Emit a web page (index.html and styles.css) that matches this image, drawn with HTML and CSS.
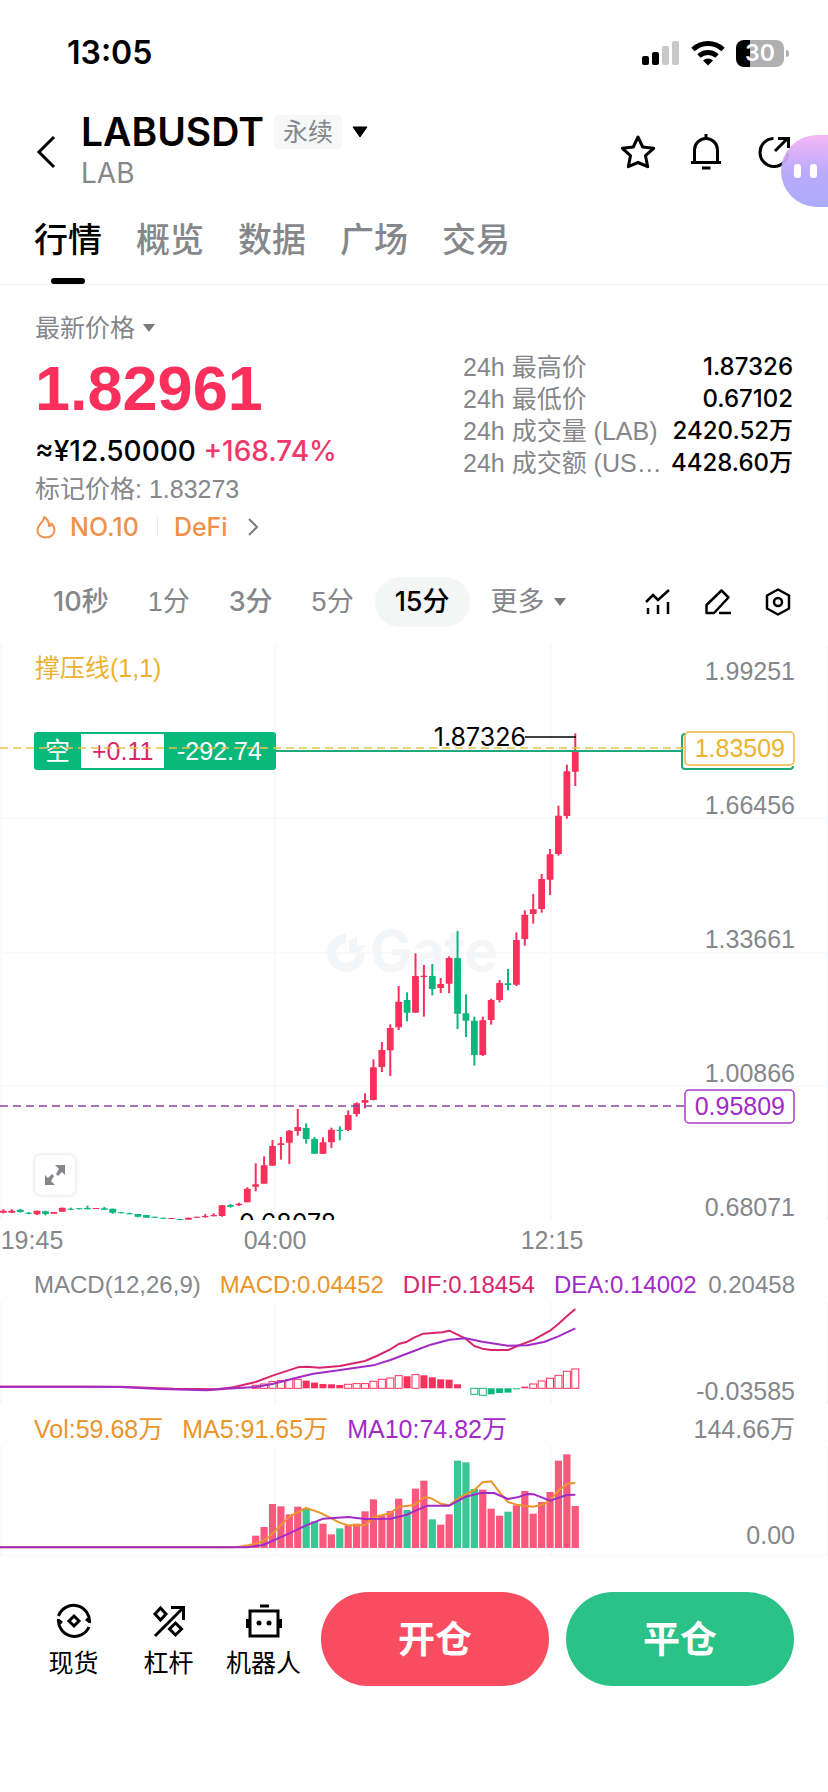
FILE: index.html
```html
<!DOCTYPE html>
<html lang="zh-CN">
<head>
  <meta charset="UTF-8">
  <meta name="viewport" content="width=device-width, initial-scale=1">
  <title>LABUSDT 永续</title>
  <link rel="stylesheet" href="styles.css">
</head>
<body>
  <div class="status-bar">
    <span class="clock">13:05</span>
    <div class="status-icons">
      <svg width="38" height="26" viewBox="0 0 38 26">
        <rect x="0" y="16" width="7" height="9" rx="2"/>
        <rect x="10" y="12" width="7" height="13" rx="2"/>
        <rect x="20" y="6" width="7" height="19" rx="2" fill="#c9c9c9"/>
        <rect x="30" y="1" width="7" height="24" rx="2" fill="#c9c9c9"/>
      </svg>
      <svg width="34" height="26" viewBox="0 0 34 26" fill="none" stroke="#000" stroke-width="5">
        <path d="M2 9.500a21.500 21.500 0 0 1 30 0"/>
        <path d="M8 16a13 13 0 0 1 18 0"/>
        <path d="M17 25.500l-5-5a7.500 7.500 0 0 1 10 0z" fill="#000" stroke="none"/>
      </svg>
      <div class="battery"><span>30</span></div>
    </div>
  </div>

  <header class="header">
    <button class="icon-btn back" aria-label="返回">
      <svg width="20" height="34" viewBox="0 0 20 34" fill="none" stroke="#000" stroke-width="3"><path d="M18 2L3 17l15 15"/></svg>
    </button>
    <div class="pair">
      <div class="pair-row">
        <h1>LABUSDT</h1>
        <span class="tag">永续</span>
        <svg width="16" height="12" viewBox="0 0 16 12"><path d="M1 1h14l-7 10z" stroke="#000" stroke-linejoin="round"/></svg>
      </div>
      <div class="pair-sub">LAB</div>
    </div>
    <div class="header-icons">
      <button class="icon-btn" aria-label="收藏">
        <svg width="36" height="36" viewBox="0 0 36 36" fill="none" stroke="#000" stroke-width="3" stroke-linejoin="round"><path d="M18 3l4.700 10 11 1.300-8.200 7.400 2.200 11L18 28.500 8.300 32.700l2.200-11L2.300 14.300l11-1.300z"/></svg>
      </button>
      <button class="icon-btn" aria-label="提醒">
        <svg width="36" height="36" viewBox="0 0 36 36" fill="none" stroke="#000" stroke-width="3"><path d="M18 0v4M6.500 28V16a11.500 11.500 0 0 1 23 0v12M3 28.500h30M14 34h8.500"/></svg>
      </button>
      <button class="icon-btn" aria-label="分享">
        <svg width="36" height="36" viewBox="0 0 36 36" fill="none" stroke="#000" stroke-width="3"><path d="M17.500 4.500A14 14 0 1 0 32 19M19 17L32 4M22 4.500h10.500V14"/></svg>
      </button>
    </div>
    <button class="assistant" aria-label="助手"><i></i><i></i></button>
  </header>

  <nav class="tabs">
    <a href="#" class="active">行情</a>
    <a href="#">概览</a>
    <a href="#">数据</a>
    <a href="#">广场</a>
    <a href="#">交易</a>
  </nav>

  <section class="summary">
    <div class="price-box">
      <button class="price-type">最新价格
        <svg width="12" height="8" viewBox="0 0 12 8"><path d="M0 0h12L6 8z" fill="#777b80"/></svg>
      </button>
      <div class="price">1.82961</div>
      <div class="converted">≈¥12.50000 <span class="up">+168.74%</span></div>
      <div class="mark">标记价格: 1.83273</div>
      <div class="rank">
        <svg width="22" height="24" viewBox="0 0 22 24" fill="none" stroke="#f0914c" stroke-width="2" stroke-linejoin="round"><path d="M9 2c1 4-6 7-6.500 13C2.500 20 6.500 22.500 11 22.500s8.500-3 8.500-7.500c0-2.500-1.500-5-3-6.500-.5 2-1.500 2.500-2.500 2.500C14 7 12 3.500 9 2z"/></svg>
        <span>NO.10</span>
        <span class="bar"></span>
        <a href="#">DeFi</a>
        <svg width="12" height="18" viewBox="0 0 12 18" fill="none" stroke="#777b80" stroke-width="2"><path d="M2 1l8 8-8 8"/></svg>
      </div>
    </div>
    <dl class="stats">
      <div><dt>24h 最高价</dt><dd>1.87326</dd></div>
      <div><dt>24h 最低价</dt><dd>0.67102</dd></div>
      <div><dt>24h 成交量 (LAB)</dt><dd>2420.52万</dd></div>
      <div><dt>24h 成交额 (USDT)</dt><dd>4428.60万</dd></div>
    </dl>
  </section>

  <div class="periods">
    <button class="fav">10秒</button>
    <button>1分</button>
    <button class="fav">3分</button>
    <button>5分</button>
    <button class="active">15分</button>
    <button class="more">更多
      <svg width="12" height="8" viewBox="0 0 12 8"><path d="M0 0h12L6 8z" fill="#777b80"/></svg>
    </button>
    <div class="tools">
      <button class="icon-btn" aria-label="指标">
        <svg width="28" height="28" viewBox="0 0 28 28" fill="none" stroke="#000" stroke-width="2.500"><path d="M2 14l7-7 5 5L25 2M4 20v6M14 17v9M24 14v12"/></svg>
      </button>
      <button class="icon-btn" aria-label="画线">
        <svg width="28" height="28" viewBox="0 0 28 28" fill="none" stroke="#000" stroke-width="2.500" stroke-linejoin="round"><path d="M17.500 2.500l7 7L10 25H2.500v-8zM15 25h12"/></svg>
      </button>
      <button class="icon-btn" aria-label="设置">
        <svg width="28" height="28" viewBox="0 0 28 28" fill="none" stroke="#000" stroke-width="2.500" stroke-linejoin="round"><path d="M14 1.500l11 6v13l-11 6-11-6v-13z"/><circle cx="14" cy="14" r="4"/></svg>
      </button>
    </div>
  </div>

  <main class="charts">
    <div class="kline">
      <svg viewBox="0 0 828 620">
        <path class="grid" d="M1 5v575M275 5v575M551 5v575M827 5v575M0 178h828M0 313h828M0 446h828"/>

        <g class="watermark">
          <path d="M346 294a19 19 0 1 0 19 19h-9a10 10 0 1 1-10-10z"/>
          <path d="M349 301l8-5v9h9l-6 9h-11z"/>
          <text x="370" y="331">Gate</text>
        </g>

        <text class="gold" x="35" y="37">撑压线(1,1)</text>

        <g id="candles"></g>

        <path d="M276 111h406" stroke="#1fa97a" stroke-width="2"/>
        <path d="M686 94h-1q-3 0-3 3v29q0 3 3 3h105q3 0 3-3" fill="none" stroke="#1fa97a" stroke-width="2"/>

        <rect x="34" y="92" width="242" height="38" rx="3" fill="#09b87b"/>
        <rect x="81" y="94" width="83" height="34" fill="#fff"/>
        <text class="white" x="45" y="120">空</text>
        <text class="pink" x="92" y="120">+0.11</text>
        <text class="white" x="177" y="120">-292.74</text>
        <path d="M0 108h685" stroke="#e9c34c" stroke-width="1.500" stroke-dasharray="8 5"/>

        <rect x="685" y="92" width="109" height="33" rx="4" fill="#fff" stroke="#e9b93a" stroke-width="1.500"/>
        <text class="gold end" x="785" y="117">1.83509</text>

        <path d="M0 466h685" stroke="#8d43a6" stroke-width="1.500" stroke-dasharray="8 5"/>
        <rect x="685" y="450" width="109" height="33" rx="4" fill="#fff" stroke="#a53bc4" stroke-width="1.500"/>
        <text class="violet end" x="785" y="475">0.95809</text>

        <text class="peak end" x="526" y="106">1.87326</text>
        <path d="M525 97h51" stroke="#000" stroke-width="1.500"/>
        <svg x="0" y="0" width="828" height="580"><text class="peak" x="239" y="592">0.68078</text></svg>

        <g class="axis">
          <text x="795" y="40">1.99251</text>
          <text x="795" y="174">1.66456</text>
          <text x="795" y="308">1.33661</text>
          <text x="795" y="442">1.00866</text>
          <text x="795" y="576">0.68071</text>
        </g>
        <g class="time">
          <text x="32" y="609">19:45</text>
          <text x="275" y="609">04:00</text>
          <text x="552" y="609">12:15</text>
        </g>
      </svg>
      <button class="expand" aria-label="全屏">
        <svg width="20" height="20" viewBox="0 0 20 20" fill="#85878a"><path d="M10 0h10v10l-3-3-4 4-2-2 3-5zM0 10l3 3 4-4 2 2-3 5 4 4H0z"/></svg>
      </button>
    </div>

    <div class="legend">
      <span>MACD(12,26,9)</span>
      <span class="orange">MACD:0.04452</span>
      <span class="pink">DIF:0.18454</span>
      <span class="violet">DEA:0.14002</span>
      <span class="max">0.20458</span>
    </div>
    <svg viewBox="0 0 828 102">
      <path class="grid" d="M1 0v102M275 0v102M551 0v102M827 0v102"/>
      <g id="macd"></g>
      <g class="axis"><text x="795" y="98">-0.03585</text></g>
    </svg>

    <div class="legend vol">
      <span class="orange">Vol:59.68万</span>
      <span class="orange">MA5:91.65万</span>
      <span class="violet">MA10:74.82万</span>
      <span class="max">144.66万</span>
    </div>
    <svg viewBox="0 0 828 110">
      <path class="grid" d="M1 0v110M275 0v110M551 0v110M827 0v110M0 110h828"/>
      <g id="volume"></g>
      <g class="axis"><text x="795" y="98">0.00</text></g>
    </svg>
  </main>

  <footer class="bottom">
    <a href="#" class="entry">
      <svg width="36" height="36" viewBox="0 0 36 36" fill="none" stroke="#000" stroke-width="3"><path d="M2.500 13A16 16 0 0 1 33.500 20M33 24A16 16 0 0 1 2.500 16M2 17l4 3M34 19l-4-3M18 13l5 5-5 5-5-5z"/></svg>
      <span>现货</span>
    </a>
    <a href="#" class="entry">
      <svg width="36" height="36" viewBox="0 0 36 36" fill="none" stroke="#000" stroke-width="3"><path d="M4 33L32 5M20 4.500h12.500V17M9.500 5l5.500 6-5.500 6-5.500-6zM24.500 20l6 6-6 6-6-6z"/></svg>
      <span>杠杆</span>
    </a>
    <a href="#" class="entry">
      <svg width="36" height="36" viewBox="0 0 36 36" fill="none" stroke="#000" stroke-width="3"><path d="M4 8h28v25H4zM14 3h9M1.500 16v9M34.500 16v9" /><circle cx="13" cy="20" r="2.500" fill="#000" stroke="none"/><circle cx="23" cy="20" r="2.500" fill="#000" stroke="none"/></svg>
      <span>机器人</span>
    </a>
    <button class="trade open">开仓</button>
    <button class="trade close">平仓</button>
  </footer>

  <script src="chart.js"></script>
</body>
</html>
```

FILE: styles.css
```css
* {
  box-sizing: border-box;
}

body {
  margin: 0;
  background: #fff;
  color: #000;
  font-family: 'Liberation Sans', 'Noto Sans CJK SC', sans-serif;
  font-size: 25px;
  line-height: 32px;
}

button {
  padding: 0;
  border: none;
  background: none;
  color: inherit;
  font: inherit;
  cursor: pointer;
}

a {
  color: inherit;
  text-decoration: none;
}

svg {
  display: block;
}

.icon-btn {
  display: flex;
}

/* status bar */
.status-bar {
  display: flex;
  justify-content: space-between;
  align-items: center;
  height: 106px;
  padding: 0 44px 0 67px;
}

.clock {
  font-family: Inter, sans-serif;
  font-size: 32px;
  font-weight: 600;
}

.status-icons {
  display: flex;
  align-items: center;
  gap: 11px;
}

.battery {
  position: relative;
  width: 48px;
  height: 27px;
  border-radius: 8px;
  background: linear-gradient(90deg, #000 14px, #b0b0b0 14px);
  color: #fff;
  font-family: Inter, sans-serif;
  font-size: 23px;
  font-weight: 600;
  line-height: 27px;
  text-align: center;
}

.battery::after {
  content: '';
  position: absolute;
  top: 10px;
  right: -5px;
  width: 3px;
  height: 7px;
  border-radius: 0 3px 3px 0;
  background: #b0b0b0;
}

/* header */
.header {
  position: relative;
  display: flex;
  align-items: center;
  height: 94px;
  padding: 0 36px 2px 36px;
}

.pair {
  flex: 1;
  padding: 0 0 4px 25px;
  font-family: Inter, 'Noto Sans CJK SC', sans-serif;
}

.pair-row {
  display: flex;
  align-items: center;
  gap: 10px;
}

h1 {
  margin: 0;
  font-size: 39px;
  font-weight: 600;
  line-height: 46px;
}

.tag {
  padding: 0 9px;
  border-radius: 4px;
  background: #f6f7f8;
  color: #85878a;
  font-size: 25px;
  line-height: 34px;
}

.pair-sub {
  color: #85878a;
  font-size: 28px;
  line-height: 36px;
}

.header-icons {
  display: flex;
  gap: 32px;
}

.assistant {
  position: absolute;
  top: 29px;
  right: 0;
  display: flex;
  align-items: center;
  gap: 9px;
  width: 47px;
  height: 72px;
  padding-left: 13px;
  border-radius: 36px 0 0 36px;
  background: linear-gradient(rgba(246, 178, 246, 0.94), rgba(184, 165, 250, 0.94) 50%, rgba(166, 166, 252, 0.94));
}

.assistant i {
  width: 7px;
  height: 14px;
  border-radius: 3px;
  background: #fff;
}

/* tabs */
.tabs {
  display: flex;
  gap: 34px;
  padding: 0 34px;
  border-bottom: 1px solid #f1f2f3;
  color: #85878a;
  font-size: 34px;
  font-weight: 500;
}

.tabs a {
  position: relative;
  padding: 20px 0 24px;
  line-height: 40px;
}

.tabs .active {
  color: #000;
}

.tabs .active::after {
  content: '';
  position: absolute;
  bottom: 0;
  left: 50%;
  width: 34px;
  height: 6px;
  margin-left: -17px;
  border-radius: 3px;
  background: #000;
}

/* price summary */
.summary {
  display: flex;
  justify-content: space-between;
  padding: 27px 35px 0;
}

.price-type {
  display: flex;
  align-items: center;
  gap: 8px;
  color: #85878a;
}

.price {
  color: #fb2f5c;
  font-size: 63px;
  font-weight: 700;
  line-height: 88px;
}

.converted {
  font-family: Inter, sans-serif;
  font-size: 28px;
  font-weight: 500;
  line-height: 38px;
}

.up {
  color: #f0386a;
}

.mark {
  color: #85878a;
  line-height: 38px;
}

.rank {
  display: flex;
  align-items: center;
  gap: 13px;
  color: #f0914c;
  font-family: Inter, sans-serif;
  font-weight: 500;
  line-height: 38px;
}

.rank .bar {
  width: 1px;
  height: 20px;
  margin: 0 3px 0 5px;
  background: #e8eaec;
}

.rank a {
  margin-right: 6px;
}

.stats {
  width: 330px;
  margin: 39px 0 0;
}

.stats div {
  display: flex;
  justify-content: space-between;
  gap: 4px;
  white-space: nowrap;
}

.stats dt {
  min-width: 0;
  overflow: hidden;
  color: #85878a;
  text-overflow: ellipsis;
}

.stats dd {
  flex: none;
  margin: 0;
  font-family: Inter, 'Noto Sans CJK SC', sans-serif;
  font-size: 24px;
  font-weight: 500;
}

/* periods */
.periods {
  display: flex;
  align-items: center;
  gap: 3px;
  margin: 31px 0 13px;
  padding: 0 36px 0 35px;
  color: #85878a;
  font-size: 27px;
}

.periods > button {
  padding: 0 18px;
  border-radius: 25px;
  line-height: 50px;
}

.periods .fav,
.periods .active {
  font-family: Inter, 'Noto Sans CJK SC', sans-serif;
  font-weight: 500;
}

.periods .active {
  padding: 0 20px;
  background: #f4f5f5;
  color: #000;
}

.periods .more {
  display: flex;
  align-items: center;
  gap: 9px;
}

.tools {
  display: flex;
  gap: 32px;
  margin-left: auto;
}

/* charts */
.charts > svg,
.kline > svg {
  width: 100%;
}

.kline {
  position: relative;
}

.expand {
  position: absolute;
  left: 35px;
  bottom: 65px;
  display: flex;
  align-items: center;
  justify-content: center;
  width: 40px;
  height: 40px;
  border-radius: 6px;
  background: #fff;
  box-shadow: 0 0 4px rgba(0, 0, 0, 0.16);
}

.grid {
  fill: none;
  stroke: #f8f9fa;
  stroke-width: 2;
}

.watermark {
  fill: #f4f5f7;
  font-family: Inter, sans-serif;
  font-size: 56px;
  font-weight: 700;
}

.axis {
  fill: #85878a;
  text-anchor: end;
}

.time {
  fill: #85878a;
  text-anchor: middle;
}

.end {
  text-anchor: end;
}

.white {
  fill: #fff;
}

.peak {
  fill: #000;
  font-family: Inter, sans-serif;
  font-size: 25px;
}

.gold {
  fill: #ecb22e;
}

.orange {
  color: #e9952c;
}

.pink {
  fill: #d9266b;
  color: #d9266b;
}

.violet {
  fill: #a22bc8;
  color: #a22bc8;
}

.legend {
  display: flex;
  padding: 8px 33px 0 34px;
  color: #85878a;
  font-size: 24px;
  line-height: 34px;
  white-space: nowrap;
}

.legend.vol {
  font-size: 25px;
}

.legend span + span {
  margin-left: 19px;
}

.legend .max:last-child {
  margin-left: auto;
}

/* bottom bar */
.bottom {
  display: flex;
  align-items: center;
  padding: 36px 34px 36px 26px;
}

.entry {
  display: flex;
  flex-direction: column;
  align-items: center;
  gap: 8px;
  width: 95px;
  padding-top: 4px;
}

.trade {
  flex: 1;
  height: 94px;
  margin-left: 10px;
  padding-top: 4px;
  border-radius: 47px;
  color: #fff;
  font-size: 37px;
  font-weight: 700;
}

.trade + .trade {
  margin-left: 17px;
}

.open {
  background: #f84c60;
}

.close {
  background: #2bc287;
}
```

FILE: chart.js
```js
const RED = '#f92f5c';
const GREEN = '#0ab77c';
const STEP = 25.23;

// one candle per 15 minutes: colour, body top, body bottom, wick top, wick bottom
// (all series use a plot scale of 3 units per pixel)
const candles = [
  ['r', 722, 728, 718, 730], ['r', 722, 728, 718, 729], ['g', 719, 726, 717, 728], ['g', 728, 731, 726, 733],
  ['r', 722, 733, 722, 735], ['g', 724, 732, 722, 736], ['r', 726, 731, 726, 731], ['r', 713, 725, 713, 725],
  ['g', 716, 719, 713, 720], ['g', 715, 718, 715, 718], ['g', 714, 718, 707, 718], ['r', 714, 717, 714, 717],
  ['g', 715, 719, 711, 719], ['g', 716, 728, 716, 731], ['g', 727, 730, 727, 730], ['g', 730, 733, 728, 733],
  ['g', 732, 740, 732, 742], ['g', 735, 743, 735, 743], ['g', 740, 743, 740, 743], ['g', 743, 746, 743, 746],
  ['r', 744, 747, 744, 747], ['g', 747, 750, 747, 750], ['r', 743, 749, 743, 749], ['r', 740, 743, 740, 743],
  ['r', 738, 742, 732, 743], ['r', 735, 739, 730, 739], ['r', 706, 738, 705, 740], ['g', 705, 710, 702, 713],
  ['r', 701, 706, 698, 708], ['r', 656, 697, 652, 697], ['r', 643, 650, 580, 664], ['r', 586, 641, 559, 641],
  ['r', 528, 587, 510, 587], ['r', 520, 525, 501, 569], ['r', 482, 518, 480, 582], ['r', 471, 483, 417, 497],
  ['g', 474, 507, 460, 521], ['g', 507, 551, 501, 551], ['r', 517, 551, 502, 552], ['r', 479, 517, 473, 534],
  ['g', 479, 483, 469, 511], ['r', 435, 480, 421, 483], ['r', 400, 432, 397, 440], ['r', 390, 398, 370, 415],
  ['r', 292, 390, 268, 391], ['r', 240, 291, 216, 306], ['r', 174, 241, 163, 318], ['r', 95, 172, 48, 180],
  ['g', 90, 128, 67, 154], ['r', 18, 128, -50, 128], ['r', 17, 21, -15, 140], ['g', 18, 57, -18, 76],
  ['r', 42, 54, 24, 69], ['r', -36, 41, -41, 70], ['g', -36, 131, -117, 177], ['g', 130, 152, 73, 201],
  ['g', 152, 255, 140, 287], ['r', 151, 255, 140, 258], ['r', 90, 150, 86, 164], ['r', 39, 90, 30, 97],
  ['g', 40, 45, -3, 61], ['r', -90, 44, -113, 48], ['r', -166, -93, -179, -73], ['r', -182, -168, -228, -139],
  ['r', -273, -183, -288, -172], ['r', -347, -271, -363, -225], ['r', -463, -348, -493, -343],
  ['r', -596, -462, -616, -454], ['r', -656, -595, -710, -552]
];

// histogram from candle 30 on: height, h = hollow, f = filled
const hist = [
  [9, 'h'], [13, 'h'], [20, 'h'], [23, 'h'], [26, 'h'], [27, 'h'], [23, 'f'], [17, 'f'], [13, 'f'], [12, 'f'],
  [10, 'f'], [12, 'h'], [14, 'h'], [14, 'h'], [21, 'h'], [27, 'h'], [31, 'h'], [38, 'h'], [36, 'f'], [41, 'h'],
  [39, 'f'], [33, 'f'], [27, 'f'], [26, 'f'], [12, 'f'], [0, 'f'], [-18, 'h'], [-21, 'h'], [-18, 'f'], [-14, 'f'],
  [-13, 'f'], [-3, 'f'], [5, 'f'], [13, 'h'], [22, 'h'], [30, 'h'], [39, 'h'], [51, 'h'], [58, 'h']
];

// volume from candle 26 on
const vols = [
  4, 1, 2, 10, 37, 63, 132, 125, 101, 124, 119, 80, 73, 41, 59, 68, 73, 110, 146, 98, 111, 148, 114, 178, 202,
  86, 70, 101, 262, 257, 177, 175, 118, 97, 109, 128, 171, 103, 138, 168, 262, 281, 126
];

const dif = [[0, 380], [360, 380], [520, 386], [650, 388], [700, 382], [767, 366], [820, 346], [893, 322], [920, 320],
  [960, 323], [1020, 318], [1095, 303], [1130, 288], [1171, 268], [1196, 252], [1221, 245], [1242, 233], [1270, 221],
  [1327, 217], [1348, 212], [1397, 236], [1423, 258], [1447, 266], [1474, 270], [1524, 270], [1552, 258], [1602, 239],
  [1650, 212], [1675, 192], [1701, 168], [1726, 147]];
const dea = [[0, 380], [260, 380], [360, 381], [480, 387], [620, 391], [680, 386], [767, 381], [820, 371], [890, 353],
  [940, 341], [1000, 333], [1120, 316], [1171, 300], [1242, 273], [1292, 254], [1348, 239], [1397, 235], [1447, 245],
  [1524, 257], [1582, 256], [1632, 246], [1675, 229], [1726, 205]];
const ma5 = [[0, 862], [700, 862], [742, 857], [780, 847], [800, 836], [818, 820], [868, 770], [918, 744], [960, 758],
  [1019, 788], [1045, 796], [1095, 796], [1120, 772], [1171, 760], [1196, 740], [1242, 736], [1272, 712], [1292, 714],
  [1322, 731], [1348, 736], [1373, 716], [1423, 690], [1448, 667], [1474, 664], [1499, 697], [1524, 726], [1549, 734],
  [1600, 740], [1632, 732], [1650, 722], [1675, 692], [1701, 672], [1726, 668]];
const ma10 = [[0, 862], [742, 862], [790, 855], [868, 820], [918, 796], [970, 776], [1045, 771], [1095, 777],
  [1171, 776], [1221, 764], [1242, 754], [1282, 737], [1348, 737], [1397, 710], [1442, 699], [1482, 699], [1524, 717],
  [1552, 712], [1582, 702], [1602, 703], [1650, 722], [1701, 705], [1726, 704]];

const cx = i => 3.4 + i * STEP / 3;
const color = c => (c === 'r' ? RED : GREEN);

function rect(x, y, w, h, attrs) {
  return `<rect x="${x}" y="${y}" width="${w}" height="${h}" ${attrs}/>`;
}

function line(points, top, stroke) {
  const d = points.map(([x, y]) => `${x / 3},${(y - top) / 3}`).join(' ');
  return `<polyline points="${d}" fill="none" stroke="${stroke}" stroke-width="2" stroke-linejoin="round"/>`;
}

document.getElementById('candles').innerHTML = candles.map(([c, top, bottom, high, low], i) => {
  const y = v => 330 + v / 3;
  const fill = `fill="${color(c)}"`;
  return rect(cx(i) - 1, y(high), 2, (low - high) / 3, fill) +
    rect(cx(i) - 3.4, y(top), 6.8, (bottom - top) / 3, `${fill} rx="0.5"`);
}).join('');

document.getElementById('macd').innerHTML = hist.map(([v, kind], n) => {
  const c = v < 0 ? GREEN : RED;
  const x = cx(n + 30);
  const h = Math.abs(v) / 3;
  const y = 86.3 - (v > 0 ? h : 0);
  return kind === 'f'
    ? rect(x - 3.5, y, 7, h, `fill="${c}"`)
    : rect(x - 3.5, y, 7, h, `fill="#fff" stroke="${c}"`);
}).join('') + line(dif, 126, '#d9266b') + line(dea, 126, '#a22bc8');

document.getElementById('volume').innerHTML = vols.map((v, n) => {
  const i = n + 26;
  return rect(cx(i) - 3.6, 102 - v / 3, 7.2, v / 3, `fill="${candles[i][0] === 'r' ? '#fa597d' : '#3bc696'}"`);
}).join('') + line(ma5, 558, '#e9952c') + line(ma10, 558, '#a22bc8');
```
